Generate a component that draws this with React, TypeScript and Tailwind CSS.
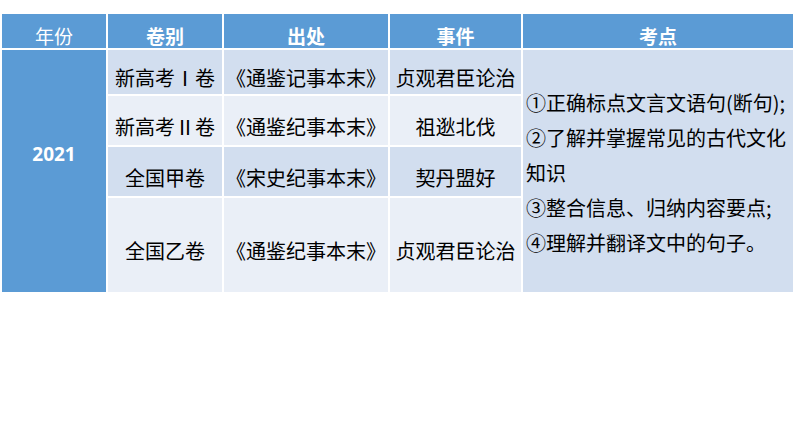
import React from "react";

const cjk = { fontFamily: '"Noto Sans CJK SC", "Noto Sans", sans-serif' };

function Cell({ children, bg, className = "" }: { children: React.ReactNode; bg: string; className?: string }) {
  return (
    <div className={`flex items-center justify-center pt-3 text-[20px] leading-none text-black whitespace-nowrap ${bg} ${className}`}>
      {children}
    </div>
  );
}

export default function App() {
  const rows = [
    { a: "新高考Ⅰ卷", b: "《通鉴记事本末》", c: "贞观君臣论治", bg: "bg-[#d2deef]", h: "h-[44px]" },
    { a: "新高考Ⅱ卷", b: "《通鉴纪事本末》", c: "祖逖北伐", bg: "bg-[#eaeff7]", h: "h-[49px]" },
    { a: "全国甲卷", b: "《宋史纪事本末》", c: "契丹盟好", bg: "bg-[#d2deef]", h: "h-[49px]" },
    { a: "全国乙卷", b: "《通鉴纪事本末》", c: "贞观君臣论治", bg: "bg-[#eaeff7]", h: "h-[94px]" },
  ];
  return (
    <div className="w-[794px] h-[447px] bg-white pt-[14px] pl-[2px]" style={cjk}>
      <div className="grid grid-cols-[104px_114px_164px_131px_270px] gap-[2px] bg-white w-[791px]">
        {/* Header */}
        <div className="h-[34px] bg-[#5b9bd5] flex items-center justify-center pt-2 text-[19px] leading-none text-white">年份</div>
        <div className="h-[34px] bg-[#5b9bd5] flex items-center justify-center pt-2 text-[19px] leading-none text-white font-bold">卷别</div>
        <div className="h-[34px] bg-[#5b9bd5] flex items-center justify-center pt-2 text-[19px] leading-none text-white font-bold">出处</div>
        <div className="h-[34px] bg-[#5b9bd5] flex items-center justify-center pt-2 text-[19px] leading-none text-white font-bold">事件</div>
        <div className="h-[34px] bg-[#5b9bd5] flex items-center justify-center pt-2 text-[19px] leading-none text-white font-bold">考点</div>

        {/* Year column */}
        <div className="row-span-4 col-start-1 row-start-2 bg-[#5b9bd5] flex items-center justify-center pb-[34px]">
          <span className="text-white font-bold text-[19px]" style={{ fontFamily: '"Open Sans", sans-serif' }}>2021</span>
        </div>

        {rows.map((r, i) => (
          <React.Fragment key={i}>
            <Cell bg={r.bg} className={`${r.h} col-start-2`}>{r.a}</Cell>
            <Cell bg={r.bg} className={r.h}>{r.b}</Cell>
            <Cell bg={r.bg} className={r.h}>{r.c}</Cell>
          </React.Fragment>
        ))}

        {/* Last column */}
        <div className="row-span-4 col-start-5 row-start-2 bg-[#d2deef] flex flex-col justify-center pl-[3px] pt-[2px] text-[20px] leading-[35px] text-black whitespace-nowrap">
          <div>①正确标点文言文语句(断句);</div>
          <div>②了解并掌握常见的古代文化</div>
          <div>知识</div>
          <div>③整合信息、归纳内容要点;</div>
          <div>④理解并翻译文中的句子。</div>
        </div>
      </div>
    </div>
  );
}
